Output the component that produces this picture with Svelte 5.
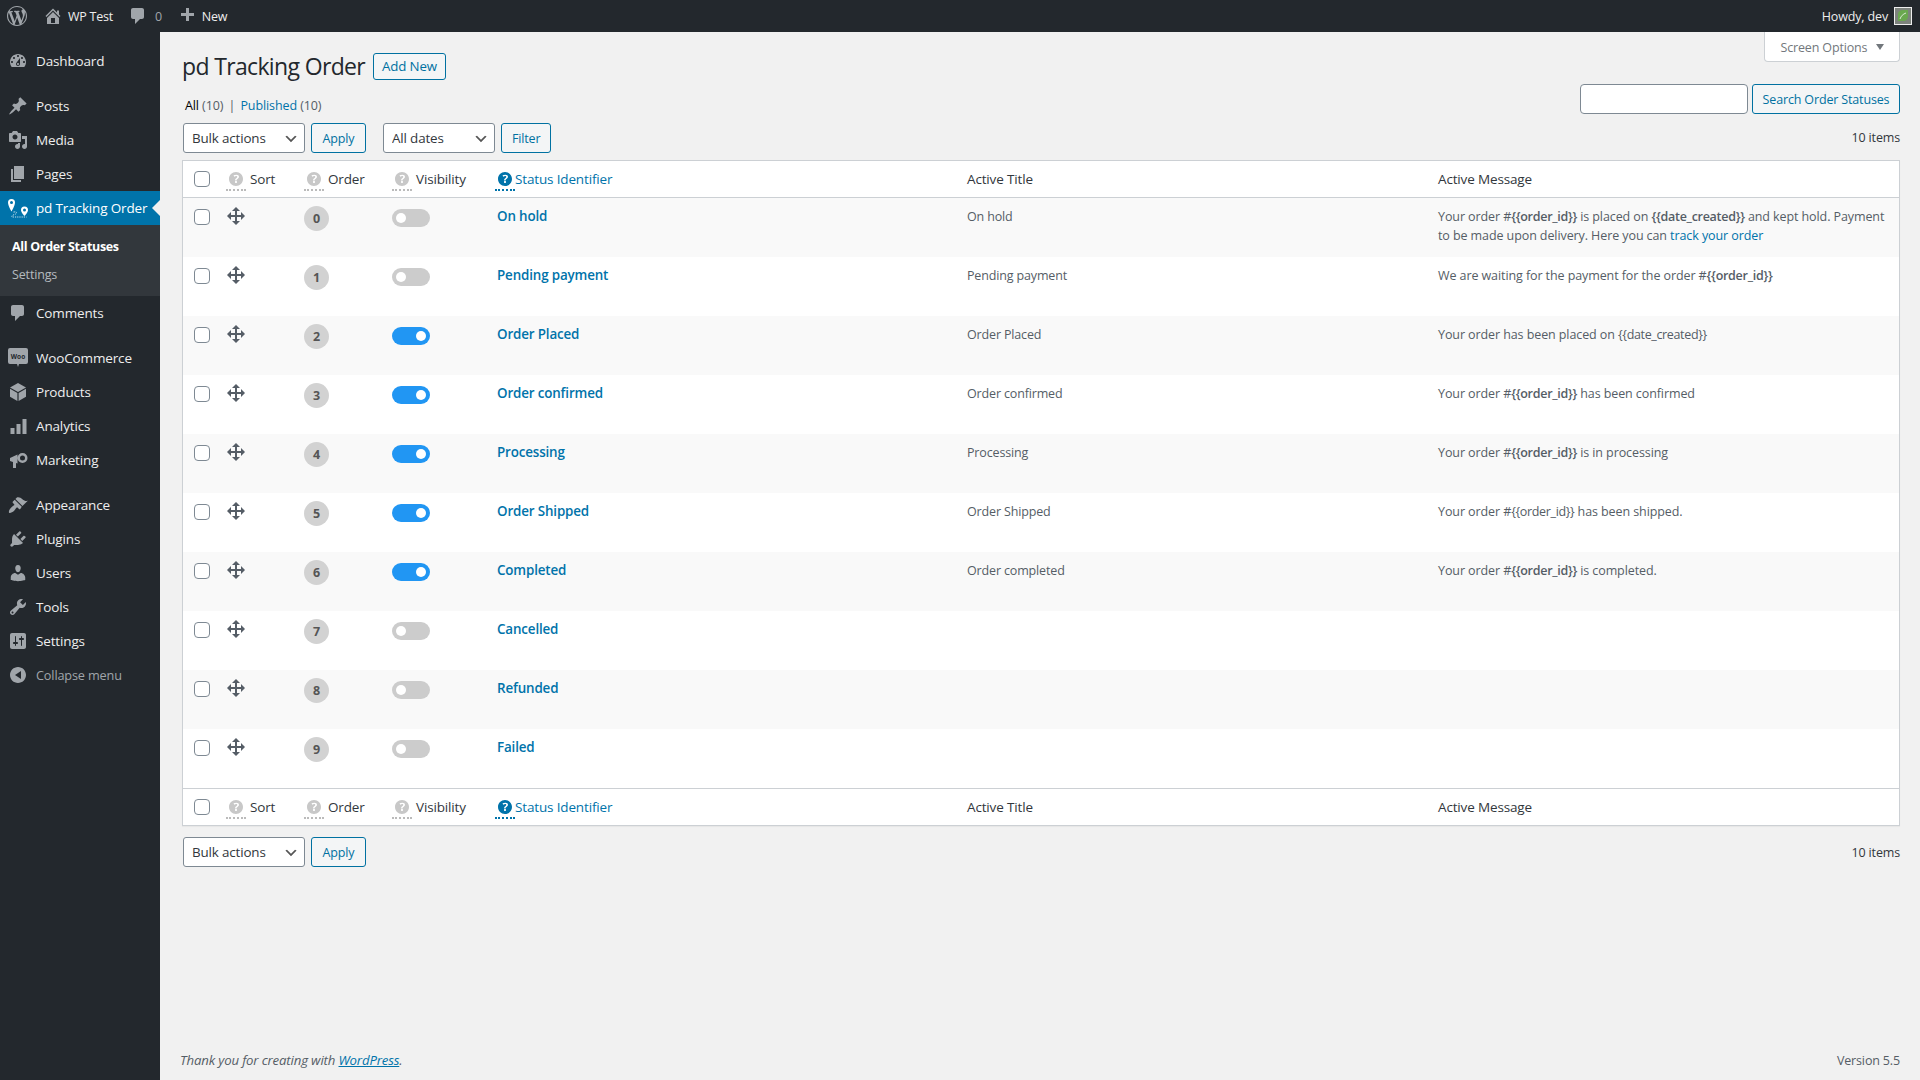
<script>
  const icons = {
    logo: 'M20 10c0-5.51-4.49-10-10-10C4.48 0 0 4.49 0 10c0 5.52 4.48 10 10 10 5.51 0 10-4.48 10-10zM7.78 15.37L4.37 6.22c.55-.02 1.17-.08 1.17-.08.5-.06.44-1.13-.06-1.11 0 0-1.45.11-2.37.11-.18 0-.37 0-.58-.01C4.12 2.69 6.87 1.11 10 1.11c2.33 0 4.45.87 6.05 2.34-.68-.11-1.65.39-1.65 1.58 0 .74.45 1.36.9 2.1.35.61.55 1.36.55 2.46 0 1.49-1.4 5-1.4 5l-3.03-8.37c.54-.02.82-.17.82-.17.5-.05.44-1.25-.06-1.22 0 0-1.44.12-2.38.12-.87 0-2.33-.12-2.33-.12-.5-.03-.56 1.2-.06 1.22l.92.08 1.26 3.41zM17.41 10c.24-.64.74-1.87.43-4.25.7 1.29 1.05 2.71 1.05 4.25 0 3.29-1.73 6.24-4.4 7.78.97-2.59 1.94-5.2 2.92-7.78zM6.1 18.09C3.12 16.65 1.11 13.53 1.11 10c0-1.3.23-2.48.72-3.59C3.25 10.3 4.67 14.2 6.1 18.09zm4.03-6.63l2.58 6.98c-.86.29-1.76.45-2.71.45-.79 0-1.57-.11-2.29-.33.81-2.38 1.62-4.74 2.42-7.1z',
    home: 'M16 8.5l1.53 1.53-1.06 1.06L10 4.62l-6.47 6.47-1.06-1.06L10 2.5l4 4v-2h2v4zm-6-2.46l6 5.99V18H4v-5.97zM12 17v-5H8v5h4z',
    comment: 'M5 2h9c1.1 0 2 .9 2 2v7c0 1.1-.9 2-2 2h-2l-5 5v-5H5c-1.1 0-2-.9-2-2V4c0-1.1.9-2 2-2z',
    plus: 'M17 7v3h-5v5H9v-5H4V7h5V2h3v5h5z',
    dashboard: 'M3.76 16h12.48c1.1-1.37 1.76-3.11 1.76-5 0-4.42-3.58-8-8-8s-8 3.58-8 8c0 1.89.66 3.63 1.76 5zM10 4c.55 0 1 .45 1 1s-.45 1-1 1-1-.45-1-1 .45-1 1-1zM6 6c.55 0 1 .45 1 1s-.45 1-1 1-1-.45-1-1 .45-1 1-1zm8 0c.55 0 1 .45 1 1s-.45 1-1 1-1-.45-1-1 .45-1 1-1zm-5.37 5.55L12 7v6c0 1.1-.9 2-2 2s-2-.9-2-2c0-.57.24-1.08.63-1.45zM4 10c.55 0 1 .45 1 1s-.45 1-1 1-1-.45-1-1 .45-1 1-1zm12 0c.55 0 1 .45 1 1s-.45 1-1 1-1-.45-1-1 .45-1 1-1zm-5 3c0-.55-.45-1-1-1s-1 .45-1 1 .45 1 1 1 1-.45 1-1z',
    pin: 'M10.44 3.02l1.82-1.82 6.36 6.35-1.83 1.82c-1.05-.68-2.48-.57-3.41.36l-.75.75c-.92.93-1.04 2.35-.35 3.41l-1.83 1.82-2.41-2.41-2.8 2.79c-.42.42-3.38 2.71-3.8 2.29s1.86-3.39 2.28-3.81l2.79-2.79L4.1 9.36l1.83-1.82c1.05.69 2.48.57 3.4-.36l.75-.75c.93-.92 1.05-2.35.36-3.41z',
    media: 'M13 11V4c0-.55-.45-1-1-1h-1.67L9 1H5L3.67 3H2c-.55 0-1 .45-1 1v7c0 .55.45 1 1 1h10c.55 0 1-.45 1-1zM7 4.5c1.38 0 2.5 1.12 2.5 2.5S8.38 9.5 7 9.5 4.5 8.38 4.5 7 5.62 4.5 7 4.5zM14 6h5v10.5c0 1.38-1.12 2.5-2.5 2.5S14 17.88 14 16.5s1.12-2.5 2.5-2.5c.17 0 .34.02.5.05V9h-3V6zm-4 8.05V13h2v3.5c0 1.38-1.12 2.5-2.5 2.5S7 17.88 7 16.5 8.12 14 9.5 14c.17 0 .34.02.5.05z',
    pages: 'M6 15V2h10v13H6zm-1 1h8v2H3V5h2v11z',
    products: 'M10 1l8 4.5-8 4.5-8-4.5zM2 6.7l7.4 4.2V19L2 14.7zM18 6.7v8L10.6 19v-8.1z',
    analytics: 'M2.5 12h4v6h-4zM8.5 8h4v10h-4zM14.5 3h4v15h-4z',
    marketing: 'M2 8l7.5-3.5v9L8 13v5H5v-6l-3-1zM14.5 3a5 5 0 1 1 0 10a5 5 0 0 1 0-10zm0 2.5a2.5 2.5 0 1 0 0 5a2.5 2.5 0 0 0 0-5z',
    appearance: 'M14.48 11.06L7.41 3.99l1.5-1.5c.5-.56 2.3-.47 3.51.32 1.21.8 1.43 1.28 2.91 2.1 1.18.64 2.45 1.26 4.45.85zm-.71.71L6.7 4.7 4.93 6.47c-.39.39-.39 1.02 0 1.41l1.06 1.06c.39.39.39 1.03 0 1.42-.6.6-1.43 1.11-2.21 1.69-.35.26-.7.53-1.01.84-1.34 1.33-2.37 4.1-1.66 4.8.71.7 3.47-.32 4.8-1.65.31-.31.58-.66.84-1.01.58-.78 1.09-1.61 1.69-2.21.39-.39 1.02-.39 1.41 0l1.06 1.06c.39.39 1.02.39 1.41 0z',
    plugins: 'M13.11 4.36L9.87 7.6 8 5.73l3.24-3.24c.35-.34 1.05-.2 1.56.32.52.51.66 1.21.31 1.55zm-8 1.77l.91-1.12 9.01 9.01-1.19.84c-.71.71-2.63 1.16-3.82 1.16H6.14L4.9 17.26c-.59.59-1.54.59-2.12 0-.59-.58-.59-1.53 0-2.12l1.24-1.24v-3.88c0-1.13.4-3.19 1.09-3.89zm7.26 3.97l3.24-3.24c.34-.35 1.04-.21 1.55.31.52.51.66 1.21.31 1.55l-3.24 3.25z',
    users: 'M10 9.25c-2.27 0-2.73-3.44-2.73-3.44C7 4.02 7.82 2 9.97 2c2.16 0 2.98 2.02 2.71 3.81 0 0-.41 3.44-2.68 3.44zm0 2.57L12.72 10c2.39 0 4.52 2.33 4.52 4.53v2.49s-3.65 1.13-7.24 1.13c-3.65 0-7.24-1.13-7.24-1.13v-2.49c0-2.25 1.94-4.48 4.47-4.48z',
    tools: 'M16.68 9.77c-1.34 1.34-3.3 1.67-4.95.99l-5.41 6.52c-.99.99-2.59.99-3.58 0s-.99-2.59 0-3.57l6.52-5.42c-.68-1.65-.35-3.61.99-4.95 1.28-1.28 3.12-1.62 4.72-1.06l-2.89 2.89 2.82 2.82 2.86-2.87c.53 1.58.18 3.39-1.08 4.65zM3.81 16.21c.4.39 1.04.39 1.43 0 .4-.4.4-1.04 0-1.43-.39-.4-1.03-.4-1.43 0-.39.39-.39 1.03 0 1.43z',
    settings: 'M18 16V4c0-1.1-.9-2-2-2H4c-1.1 0-2 .9-2 2v12c0 1.1.9 2 2 2h12c1.1 0 2-.9 2-2zM8 11h1c.55 0 1 .45 1 1s-.45 1-1 1H8v1.5c0 .28-.22.5-.5.5s-.5-.22-.5-.5V13H6c-.55 0-1-.45-1-1s.45-1 1-1h1V5.5c0-.28.22-.5.5-.5s.5.22.5.5V11zm5-2h-1c-.55 0-1-.45-1-1s.45-1 1-1h1V5.5c0-.28.22-.5.5-.5s.5.22.5.5V7h1c.55 0 1 .45 1 1s-.45 1-1 1h-1v5.5c0 .28-.22.5-.5.5s-.5-.22-.5-.5V9z',
    collapse: 'M18 10c0-4.42-3.58-8-8-8s-8 3.58-8 8 3.58 8 8 8 8-3.58 8-8zm-5-4v8l-6-4z',
    move: 'M19 10l-4 4v-3h-4v4h3l-4 4-4-4h3v-4H5v3l-4-4 4-4v3h4V5H6l4-4 4 4h-3v4h4V6z',
    help: 'M17 10c0-3.87-3.14-7-7-7-3.87 0-7 3.13-7 7 0 3.86 3.13 7 7 7 3.86 0 7-3.14 7-7zm-6.3 1.48H9.14v-.43c0-.38.08-.7.24-.98s.46-.57.88-.89c.41-.29.68-.53.81-.71.14-.18.2-.39.2-.62 0-.25-.09-.44-.28-.58-.19-.13-.45-.19-.79-.19-.58 0-1.25.19-2 .57l-.64-1.28c.87-.49 1.8-.74 2.77-.74.81 0 1.45.2 1.92.58.48.39.71.91.71 1.55 0 .43-.09.8-.29 1.11-.19.32-.57.67-1.13 1.05-.38.28-.61.49-.71.63-.1.15-.15.34-.15.57v.36zm-1.47 2.23c-.18-.18-.28-.43-.28-.75 0-.33.09-.58.27-.76.18-.17.44-.26.78-.26.33 0 .58.09.76.27.18.18.27.43.27.75 0 .31-.09.56-.27.74-.18.19-.43.28-.76.28-.34 0-.6-.09-.77-.27z'
  };

  const menu = [
    { label: 'Dashboard', icon: 'dashboard' },
    { label: 'Posts', icon: 'pin', gap: 11 },
    { label: 'Media', icon: 'media' },
    { label: 'Pages', icon: 'pages' },
    { label: 'pd Tracking Order', icon: 'track', current: true },
    { label: 'Comments', icon: 'comment' },
    { label: 'WooCommerce', icon: 'woo', gap: 11 },
    { label: 'Products', icon: 'products' },
    { label: 'Analytics', icon: 'analytics' },
    { label: 'Marketing', icon: 'marketing' },
    { label: 'Appearance', icon: 'appearance', gap: 11 },
    { label: 'Plugins', icon: 'plugins' },
    { label: 'Users', icon: 'users' },
    { label: 'Tools', icon: 'tools' },
    { label: 'Settings', icon: 'settings' }
  ];

  const statuses = [
    { name: 'On hold', on: false, title: 'On hold', msg: 'hold' },
    { name: 'Pending payment', on: false, title: 'Pending payment', msg: 'pending' },
    { name: 'Order Placed', on: true, title: 'Order Placed', msg: 'placed' },
    { name: 'Order confirmed', on: true, title: 'Order confirmed', msg: ' has been confirmed' },
    { name: 'Processing', on: true, title: 'Processing', msg: ' is in processing' },
    { name: 'Order Shipped', on: true, title: 'Order Shipped', msg: 'shipped' },
    { name: 'Completed', on: true, title: 'Order completed', msg: ' is completed.' },
    { name: 'Cancelled', on: false },
    { name: 'Refunded', on: false },
    { name: 'Failed', on: false }
  ];
</script>

{#snippet icon(name, cls = 'ico')}
  <svg class={cls} viewBox="0 0 20 20" aria-hidden="true"><path fill-rule="evenodd" d={icons[name]} /></svg>
{/snippet}

{#snippet headRow()}
  <tr>
    <th class="col-check"><input type="checkbox" class="check" /></th>
    <th><span class="th-help">{@render icon('help', 'help')}<span>Sort</span></span></th>
    <th><span class="th-help">{@render icon('help', 'help')}<span>Order</span></span></th>
    <th><span class="th-help">{@render icon('help', 'help')}<span>Visibility</span></span></th>
    <th><span class="th-help sorted">{@render icon('help', 'help')}<span>Status Identifier</span></span></th>
    <th>Active Title</th>
    <th>Active Message</th>
  </tr>
{/snippet}

<div class="topbar">
  <div class="bar-left">
    <span class="bar-logo">{@render icon('logo', 'bar-ico')}</span>
    <span class="bar-item">{@render icon('home', 'bar-ico small')}WP Test</span>
    <span class="bar-item">{@render icon('comment', 'bar-ico small')}<span class="muted">0</span></span>
    <span class="bar-item">{@render icon('plus', 'bar-ico small')}New</span>
  </div>
  <div class="howdy">
    Howdy, dev
    <span class="avatar"><svg viewBox="0 0 16 16"><rect width="16" height="16" fill="#7d837d" /><path d="M3 13V6c0-2 2-4 5-4h5v6c0 3-2 5-5 5z" fill="#6aa84f" /><path d="M5 11c1-3 3-5 6-6" stroke="#d9ead3" fill="none" /></svg></span>
  </div>
</div>

<div class="shell">
  <nav class="sidebar">
    {#each menu as item}
      <a class="menu-item" class:current={item.current} style={item.gap ? `margin-top: ${item.gap}px` : ''} href="#top">
        {#if item.icon === 'track'}
          <svg class="ico white" viewBox="0 0 20 20">
            <path fill-rule="evenodd" d="M3.5 1a3.5 3.500 0 0 1 3.500 3.500C7 7.500 3.500 13.500 3.500 13.500S0 7.500 0 4.500A3.500 3.500 0 0 1 3.500 1zm0 2a1.500 1.500 0 1 0 0 3a1.500 1.500 0 0 0 0-3zM16.500 8.500a3.500 3.500 0 0 1 3.500 3.500c0 2.500-3.500 6-3.500 6s-3.500-3.500-3.500-6a3.500 3.500 0 0 1 3.500-3.500zm0 2a1.500 1.500 0 1 0 0 3a1.500 1.500 0 0 0 0-3z" />
            <path d="M5.500 14c4-.5 4 1.500 1 2.500s-4 2.500-1 2.500h13" fill="none" stroke="#fff" stroke-width=".8" stroke-dasharray="1.200 1" />
          </svg>
        {:else if item.icon === 'woo'}
          <svg class="ico" viewBox="0 0 20 20">
            <path d="M2 0h16a2 2 0 0 1 2 2v12a2 2 0 0 1-2 2h-7l-1 3-1-3H2a2 2 0 0 1-2-2V2a2 2 0 0 1 2-2z" />
            <text x="10" y="10.500" text-anchor="middle" class="woo-text">Woo</text>
          </svg>
        {:else}
          {@render icon(item.icon)}
        {/if}
        <span>{item.label}</span>
      </a>
      {#if item.current}
        <div class="submenu">
          <a class="sub-current" href="#top">All Order Statuses</a>
          <a href="#top">Settings</a>
        </div>
      {/if}
    {/each}
    <div class="collapse">{@render icon('collapse')}<span>Collapse menu</span></div>
  </nav>

  <main class="content">
    <button class="screen-options">Screen Options <i class="caret"></i></button>

    <div class="heading">
      <h1>pd Tracking Order</h1>
      <button class="btn">Add New</button>
    </div>

    <div class="toolbar">
      <div class="toolbar-left">
        <div class="views">
          <b>All</b> <span class="count">(10)</span> <span class="sep">|</span> <a href="#top">Published</a> <span class="count">(10)</span>
        </div>
        <div class="actions">
          <select class="sel sel-bulk"><option>Bulk actions</option></select>
          <button class="btn plain apply">Apply</button>
          <select class="sel sel-date"><option>All dates</option></select>
          <button class="btn plain">Filter</button>
        </div>
      </div>
      <div class="toolbar-right">
        <div class="search">
          <input type="text" class="search-input" />
          <button class="btn plain">Search Order Statuses</button>
        </div>
        <div class="items">10 items</div>
      </div>
    </div>

    <table class="list">
      <colgroup>
        <col style="width: 33px" /><col style="width: 78px" /><col style="width: 88px" /><col style="width: 103px" /><col style="width: 472px" /><col style="width: 471px" /><col />
      </colgroup>
      <thead>{@render headRow()}</thead>
      <tbody>
        {#each statuses as s, i}
          <tr class:alt={i % 2 === 0}>
            <td class="col-check cell-check"><input type="checkbox" class="check" /></td>
            <td class="cell-move">{@render icon('move', 'move')}</td>
            <td class="cell-badge"><span class="badge">{i}</span></td>
            <td class="cell-toggle"><span class="toggle" class:on={s.on}><i></i></span></td>
            <td class="cell-name"><a class="name" href="#top">{s.name}</a></td>
            <td>{s.title ?? ''}</td>
            <td class="msg">
              {#if s.msg === 'hold'}
                Your order #<b>{'{{order_id}}'}</b> is placed on <b>{'{{date_created}}'}</b> and kept hold. Payment to be made upon delivery. Here you can <a href="#top">track your order</a>
              {:else if s.msg === 'pending'}
                We are waiting for the payment for the order #<b>{'{{order_id}}'}</b>
              {:else if s.msg === 'placed'}
                Your order has been placed on <span class="tag">{'{{date_created}}'}</span>
              {:else if s.msg === 'shipped'}
                Your order #<span class="tag">{'{{order_id}}'}</span> has been shipped.
              {:else if s.msg}
                Your order #<b>{'{{order_id}}'}</b>{s.msg}
              {/if}
            </td>
          </tr>
        {/each}
      </tbody>
      <tfoot>{@render headRow()}</tfoot>
    </table>

    <div class="bottom-nav">
      <div class="actions">
        <select class="sel sel-bulk"><option>Bulk actions</option></select>
        <button class="btn plain apply">Apply</button>
      </div>
      <div class="items">10 items</div>
    </div>

    <footer class="foot">
      <em>Thank you for creating with <a href="#top">WordPress</a>.</em>
      <span>Version 5.5</span>
    </footer>
  </main>
</div>

<style>
  :global(body) {
    margin: 0;
    background: #f1f1f1;
    color: #444;
    font-family: "Open Sans", "Noto Sans", sans-serif;
    font-size: 12.5px;
    line-height: 19px;
    letter-spacing: -0.15px;
    overflow: hidden;
  }

  a {
    color: #0073aa;
    text-decoration: none;
  }

  /* top bar */
  .topbar {
    height: 32px;
    background: #23282d;
    color: #eee;
    display: flex;
    align-items: center;
    justify-content: space-between;
  }

  .bar-left {
    display: flex;
    align-items: center;
    letter-spacing: -0.25px;
  }

  .bar-logo {
    display: flex;
    width: 27px;
    padding-left: 7px;
    margin-right: 9px;
  }

  .bar-ico {
    width: 20px;
    height: 20px;
    fill: #a0a5aa;
    flex: none;
  }

  .bar-ico.small {
    margin-right: 5px;
  }

  .bar-item {
    display: flex;
    align-items: center;
    margin-right: 15px;
  }

  .muted {
    color: #a0a5aa;
    margin-left: 2px;
  }

  .howdy {
    display: flex;
    align-items: center;
    gap: 6px;
    padding-right: 8px;
  }

  .avatar {
    width: 16px;
    height: 16px;
    border: 1px solid #eee;
    display: block;
    background: #eee;
  }

  .avatar svg {
    display: block;
  }

  /* sidebar */
  .shell {
    display: flex;
    height: 1048px;
  }

  .sidebar {
    width: 160px;
    flex: none;
    background: #23282d;
    padding-top: 12px;
    box-sizing: border-box;
    font-size: 13.5px;
  }

  .menu-item {
    height: 34px;
    display: flex;
    align-items: center;
    gap: 8px;
    padding-left: 8px;
    color: #eee;
    position: relative;
  }

  .ico {
    width: 20px;
    height: 20px;
    fill: #a0a5aa;
    flex: none;
  }

  .ico.white {
    fill: #fff;
  }

  .woo-text {
    font-size: 6.5px;
    font-weight: 700;
    fill: #23282d;
    letter-spacing: 0;
  }

  .menu-item.current {
    background: #0073aa;
    color: #fff;
  }

  .menu-item.current::after {
    content: '';
    position: absolute;
    right: 0;
    top: 9px;
    border: 8px solid transparent;
    border-right-color: #f1f1f1;
    border-left: 0;
  }

  .submenu {
    background: #32373c;
    height: 71px;
    box-sizing: border-box;
    padding-top: 8px;
    font-size: 12.5px;
  }

  .submenu a {
    display: block;
    padding-left: 12px;
    height: 28px;
    line-height: 28px;
    color: rgba(240, 245, 250, 0.7);
  }

  .submenu .sub-current {
    color: #fff;
    font-weight: 700;
    letter-spacing: -0.33px;
  }

  .collapse {
    height: 34px;
    display: flex;
    align-items: center;
    gap: 8px;
    padding-left: 8px;
    color: #a0a5aa;
    font-size: 12.7px;
  }

  /* content */
  .content {
    flex: 1;
    min-width: 0;
    padding: 21px 20px 0 22px;
    display: flex;
    flex-direction: column;
    position: relative;
  }

  .screen-options {
    position: absolute;
    top: 0;
    right: 20px;
    width: 136px;
    height: 30px;
    padding: 2px 0 0;
    border: 1px solid #ccd0d4;
    border-top: 0;
    border-radius: 0 0 4px 4px;
    background: #fff;
    color: #72777c;
    font: inherit;
    letter-spacing: inherit;
  }

  .caret {
    display: inline-block;
    margin-left: 5px;
    vertical-align: 2px;
    border: 4.5px solid transparent;
    border-top: 6px solid #72777c;
    border-bottom: 0;
  }

  .heading {
    display: flex;
    align-items: center;
    height: 27px;
    gap: 8px;
  }

  h1 {
    margin: 0;
    font-size: 23px;
    font-weight: 400;
    color: #23282d;
    letter-spacing: -0.65px;
    line-height: 29px;
  }

  .btn {
    height: 27px;
    padding: 0 8px;
    box-sizing: border-box;
    border: 1px solid #0071a1;
    border-radius: 3px;
    background: #f3f5f6;
    color: #0071a1;
    font: inherit;
    letter-spacing: inherit;
  }

  .heading .btn {
    font-size: 13.3px;
  }

  .btn.plain {
    height: 30px;
    padding: 0 10px;
  }

  .toolbar {
    display: flex;
    justify-content: space-between;
    margin: 4px 0 7px;
  }

  .toolbar-left {
    padding-top: 12px;
  }

  .views {
    height: 19px;
    margin: 0 0 8px 3px;
    color: #555d66;
    letter-spacing: -0.1px;
  }

  .views b {
    font-weight: 400;
    color: #000;
  }

  .count {
    color: #555d66;
  }

  .sep {
    color: #555d66;
    margin: 0 2px;
  }

  .actions {
    display: flex;
    margin-left: 1px;
  }

  .sel {
    height: 30px;
    appearance: none;
    border: 1px solid #7e8993;
    border-radius: 3px;
    padding: 0 24px 0 8px;
    color: #32373c;
    font: inherit;
    font-size: 13.4px;
    letter-spacing: inherit;
    background: #fff url("data:image/svg+xml,%3Csvg xmlns='http://www.w3.org/2000/svg' width='20' height='20'%3E%3Cpath d='M5 6l5 5 5-5 2 1-7 7-7-7z' fill='%23555'/%3E%3C/svg%3E") no-repeat right 5px top 55%;
    background-size: 16px 16px;
  }

  .sel-bulk {
    width: 122px;
  }

  .sel-date {
    width: 112px;
    margin-left: 17px;
  }

  .actions .btn {
    margin-left: 6px;
    width: auto;
  }

  .apply {
    min-width: 55px;
  }

  .toolbar-right {
    display: flex;
    flex-direction: column;
    align-items: flex-end;
  }

  .search {
    display: flex;
    gap: 4px;
  }

  .search-input {
    width: 168px;
    height: 30px;
    box-sizing: border-box;
    border: 1px solid #7e8993;
    border-radius: 4px;
    background: #fff;
  }

  .search .btn {
    width: 148px;
    padding: 0;
  }

  .items {
    margin-top: 14px;
    color: #32373c;
  }

  /* table */
  .list {
    width: 100%;
    table-layout: fixed;
    border-collapse: separate;
    border-spacing: 0;
    background: #fff;
    border: 1px solid #ccd0d4;
    box-shadow: 0 1px 1px rgba(0, 0, 0, 0.04);
  }

  th {
    height: 36px;
    padding: 0 10px;
    box-sizing: content-box;
    text-align: left;
    font-weight: 400;
    font-size: 13.5px;
    color: #32373c;
    vertical-align: middle;
  }

  thead th {
    border-bottom: 1px solid #ccd0d4;
  }

  tfoot th {
    border-top: 1px solid #ccd0d4;
    height: 36px;
  }

  .col-check {
    padding-right: 0;
    padding-left: 11px;
  }

  th.col-check {
    line-height: 0;
  }

  .check {
    appearance: none;
    display: block;
    width: 16px;
    height: 16px;
    margin: 0;
    border: 1px solid #7e8993;
    border-radius: 4px;
    background: #fff;
    box-sizing: border-box;
  }

  .th-help {
    position: relative;
    display: flex;
    align-items: center;
    gap: 4px;
    height: 36px;
  }

  .help {
    width: 20px;
    height: 20px;
    fill: #c8c8c8;
    flex: none;
  }

  .th-help::after {
    content: '';
    position: absolute;
    left: 0;
    top: 28px;
    width: 20px;
    border-bottom: 2px dotted #bbb;
  }

  .sorted {
    color: #0073aa;
    gap: 0;
  }

  .sorted .help {
    fill: #0073aa;
  }

  .sorted::after {
    border-bottom-color: #0073aa;
  }

  .alt td {
    background: #f9f9f9;
  }

  td {
    height: 59px;
    box-sizing: border-box;
    padding: 9px 10px 0;
    vertical-align: top;
    color: #555d66;
  }

  .cell-check {
    padding: 11px 0 0 11px;
  }

  .cell-move {
    padding-top: 8px;
  }

  .cell-badge {
    padding-top: 8px;
  }

  .cell-toggle {
    padding-top: 11px;
  }

  .cell-name {
    padding-left: 12px;
  }

  .move {
    display: block;
    width: 20px;
    height: 20px;
    fill: #555d66;
  }

  .badge {
    display: flex;
    align-items: center;
    justify-content: center;
    width: 25px;
    height: 25px;
    border-radius: 50%;
    background: #d2d2d2;
    color: #555;
    font-weight: 700;
  }

  .toggle {
    display: block;
    position: relative;
    width: 38px;
    height: 18px;
    border-radius: 18px;
    background: #ccc;
  }

  .toggle i {
    position: absolute;
    top: 4px;
    left: 4px;
    width: 10px;
    height: 10px;
    border-radius: 50%;
    background: #fff;
  }

  .toggle.on {
    background: #2196f3;
  }

  .toggle.on i {
    left: 24px;
  }

  .name {
    font-weight: 600;
    font-size: 13.4px;
  }

  .msg {
    letter-spacing: -0.09px;
  }

  td b {
    font-weight: 600;
    letter-spacing: -0.28px;
  }

  .tag {
    letter-spacing: -0.35px;
  }

  .bottom-nav {
    display: flex;
    justify-content: space-between;
    align-items: center;
    margin-top: 11px;
  }

  .bottom-nav .items {
    margin-top: 0;
  }

  .foot {
    margin-top: auto;
    height: 29px;
    display: flex;
    justify-content: space-between;
    margin-left: -2px;
    color: #555d66;
  }

  .foot em {
    font-size: 13.2px;
  }

  .foot a {
    text-decoration: underline;
  }
</style>
